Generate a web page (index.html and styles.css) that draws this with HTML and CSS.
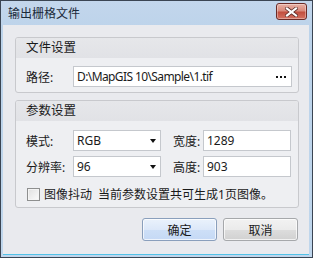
FILE: index.html
```html
<!DOCTYPE html>
<html lang="zh-CN">
<head>
    <meta charset="UTF-8">
    <title>输出栅格文件</title>
    <link rel="stylesheet" href="styles.css">
</head>
<body>
<div class="window">
    <div class="titlebar">
        <span class="title">输出栅格文件</span>
        <div class="close">
            <svg width="13" height="10" viewBox="0 0 13 10">
                <path d="M2 1.5 L11 8.5 M11 1.5 L2 8.5" stroke="#5a2a26" stroke-width="3.6" stroke-linecap="square"/>
                <path d="M2 1.5 L11 8.5 M11 1.5 L2 8.5" stroke="#fff" stroke-width="2.2" stroke-linecap="square"/>
            </svg>
        </div>
    </div>
    <div class="client">
        <div class="group">
            <div class="group-head">文件设置</div>
            <div class="group-body">
                <div class="row">
                    <span class="label">路径:</span>
                    <div class="field path">
                        <span class="path-text">D:\MapGIS 10\Sample\1.tif</span>
                        <svg class="dots" width="10" height="2" viewBox="0 0 10 2">
                            <rect x="0" y="0" width="2" height="2" fill="#111"/>
                            <rect x="4" y="0" width="2" height="2" fill="#111"/>
                            <rect x="8" y="0" width="2" height="2" fill="#111"/>
                        </svg>
                    </div>
                </div>
            </div>
        </div>
        <div class="group">
            <div class="group-head">参数设置</div>
            <div class="group-body">
                <div class="row">
                    <span class="label">模式:</span>
                    <div class="field combo"><span>RGB</span><i class="arrow"></i></div>
                    <span class="label2">宽度:</span>
                    <div class="field num">1289</div>
                </div>
                <div class="row">
                    <span class="label">分辨率:</span>
                    <div class="field combo"><span>96</span><i class="arrow"></i></div>
                    <span class="label2">高度:</span>
                    <div class="field num">903</div>
                </div>
                <div class="check-row">
                    <span class="checkbox"></span>
                    <span class="check-text">图像抖动</span>
                    <span class="note">当前参数设置共可生成1页图像。</span>
                </div>
            </div>
        </div>
        <div class="actions">
            <div class="btn default">确定</div>
            <div class="btn">取消</div>
        </div>
    </div>
</div>
</body>
</html>
```

FILE: styles.css
```css
*{
    margin: 0;
    padding: 0;
    box-sizing: border-box;
}
html,body{
    width: 100%;
    height: 100%;
    background: #fff;
}
body{
    font-family: "Noto Sans", "Noto Sans CJK SC", sans-serif;
    font-size: 12px;
    color: #1a1a1a;
}
.window{
    width: 313px;
    height: 258px;
    border: 1px solid #3b4553;
    background: linear-gradient(#c3d6ec, #bcd3ea 30px, #bfd6ec);
    padding: 0 3px 2px 2px;
    display: flex;
    flex-direction: column;
}
.titlebar{
    height: 24px;
    display: flex;
    align-items: center;
    justify-content: space-between;
}
.title{
    font-size: 12px;
    padding-left: 5px;
    color: #1c2a3a;
    line-height: 1;
    margin-top: 1px;
}
.close{
    width: 31px;
    height: 17px;
    margin-top: -3px;
    margin-right: 2px;
    border: 1px solid #6b2b27;
    border-radius: 3px;
    background: linear-gradient(#e9b1a6, #d98a7c 45%, #c24f3f 55%, #d47262);
    box-shadow: inset 0 0 0 1px rgba(255,255,255,0.35);
    display: flex;
    align-items: center;
    justify-content: center;
}
.client{
    flex: 1;
    background: #e9eaee;
    border-bottom: 1px solid #52c2e8;
    padding: 12px 10px 0 12px;
}
.group{
    border: 1px solid #c8c9cd;
    border-radius: 3px;
    background: #eeeff2;
    margin-bottom: 7px;
    overflow: hidden;
}
.group-head{
    height: 20px;
    line-height: 20px;
    padding-left: 10px;
    font-size: 12.5px;
    background: linear-gradient(#e6e7ea, #e1e2e6);
}
.group-body{
    padding: 8px 6px 5px 10px;
}
.group + .group .group-body{
    padding-top: 9px;
    padding-bottom: 6px;
}
.row{
    display: flex;
    align-items: center;
    height: 21px;
    margin-bottom: 5px;
}
.group:first-child .row{
    margin-bottom: 0;
}
.label{
    width: 47px;
}
.label2{
    width: 30px;
    margin-left: 12px;
}
.field{
    height: 21px;
    border: 1px solid #c5c8cd;
    background: #fff;
    display: flex;
    align-items: center;
    padding-left: 3px;
    line-height: 1;
}
.path{
    width: 219px;
    justify-content: space-between;
}
.path-text{
    letter-spacing: -0.6px;
}
.dots{
    margin-right: 5px;
    margin-top: 1px;
}
.combo{
    width: 88px;
    justify-content: space-between;
}
.arrow{
    width: 0;
    height: 0;
    border-left: 3.5px solid transparent;
    border-right: 3.5px solid transparent;
    border-top: 4px solid #111;
    margin-right: 4px;
}
.num{
    width: 88px;
}
.check-row{
    display: flex;
    align-items: center;
    height: 14px;
    margin-top: 10px;
}
.checkbox{
    width: 13px;
    height: 13px;
    border: 1px solid #8e8f8f;
    background: linear-gradient(135deg, #e0e0e0, #fbfbfb);
    box-shadow: inset 0 0 0 1px #f4f4f4;
    margin-left: 1px;
    margin-right: 4px;
}
.check-text{
    margin-right: 6px;
}
.actions{
    display: flex;
    justify-content: flex-end;
    gap: 6px;
    margin-top: 10px;
    padding-right: 1px;
}
.btn{
    width: 75px;
    height: 23px;
    border: 1px solid #a6a8ab;
    border-radius: 3px;
    background: linear-gradient(#f2f2f2, #ebebeb 50%, #dddddd 51%, #d1d1d1);
    box-shadow: inset 0 0 0 1px rgba(255,255,255,0.7);
    display: flex;
    align-items: center;
    justify-content: center;
}
.btn.default{
    border-color: #8a9fbc;
    background: linear-gradient(#eaf2fc, #dce8f9 50%, #cddff7 51%, #c5d9f5);
}
```
